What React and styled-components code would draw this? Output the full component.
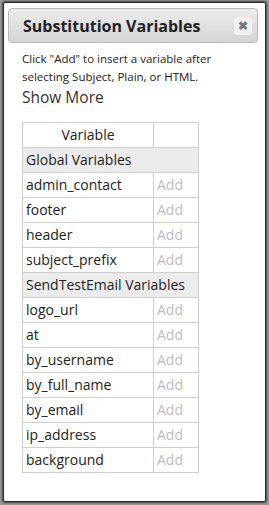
import React from "react";
import styled, { createGlobalStyle } from "styled-components";

const GlobalStyle = createGlobalStyle`
  html, body {
    margin: 0;
    padding: 0;
    background: #9a9a9a;
  }
  body {
    font-family: "Open Sans", "DejaVu Sans", sans-serif;
  }
`;

const Frame = styled.div`
  width: 269px;
  height: 505px;
  box-sizing: border-box;
  padding: 2px 3px 3px 3px;
  display: flex;
`;

const Dialog = styled.div`
  flex: 1;
  display: flex;
  flex-direction: column;
  background: #fff;
  border: 1px solid #2b2b2b;
  box-shadow: 0 0 2px 1px rgba(0, 0, 0, 0.55);
  border-radius: 2px;
  padding: 5px 7px 0 4px;
`;

const TitleBar = styled.div`
  height: 33px;
  display: flex;
  align-items: center;
  justify-content: space-between;
  padding: 0 5px 0 14px;
  border: 1px solid #b9b9b9;
  border-radius: 4px;
  background: linear-gradient(#ececec, #d5d5d5);
`;

const Title = styled.div`
  font-size: 16px;
  font-weight: bold;
  color: #222;
`;

const Close = styled.button`
  width: 18px;
  height: 18px;
  padding: 0;
  border: none;
  border-radius: 3px;
  background: #f1f1f1;
  color: #777;
  font-size: 12px;
  font-weight: bold;
  line-height: 18px;
  display: flex;
  align-items: center;
  justify-content: center;
  cursor: pointer;
`;

const Body = styled.div`
  padding: 7px 0 0 14px;
`;

const Help = styled.p`
  margin: 0;
  font-size: 11.5px;
  line-height: 18px;
  color: #221a22;
`;

const ShowMore = styled.div`
  font-size: 15.5px;
  line-height: 22px;
  color: #333;
  margin-bottom: 14px;
`;

const Table = styled.table`
  border-collapse: collapse;
  font-size: 14px;
  line-height: 18px;
  color: #222;
`;

const Th = styled.th`
  border: 1px solid #cfcfcf;
  font-weight: normal;
  text-align: center;
  padding: 3px 3px;
  width: ${(p) => p.$w}px;
  box-sizing: border-box;
`;

const Td = styled.td`
  border: 1px solid #cfcfcf;
  padding: 3px 3px;
  background: ${(p) => (p.$group ? "#ececec" : "#fff")};
  color: ${(p) => (p.$muted ? "#bdbdbd" : "#222")};
  white-space: nowrap;
`;

const groups = [
  {
    name: "Global Variables",
    vars: ["admin_contact", "footer", "header", "subject_prefix"],
  },
  {
    name: "SendTestEmail Variables",
    vars: ["logo_url", "at", "by_username", "by_full_name", "by_email", "ip_address", "background"],
  },
];

export default function App() {
  return (
    <>
      <GlobalStyle />
      <Frame>
        <Dialog>
          <TitleBar>
            <Title>Substitution Variables</Title>
            <Close aria-label="close">✖</Close>
          </TitleBar>
          <Body>
            <Help>
              Click "Add" to insert a variable after selecting Subject, Plain, or HTML.
            </Help>
            <ShowMore>Show More</ShowMore>
            <Table>
              <thead>
                <tr>
                  <Th $w={131}>Variable</Th>
                  <Th $w={45}></Th>
                </tr>
              </thead>
              <tbody>
                {groups.map((g) => (
                  <React.Fragment key={g.name}>
                    <tr>
                      <Td $group colSpan={2}>{g.name}</Td>
                    </tr>
                    {g.vars.map((v) => (
                      <tr key={v}>
                        <Td>{v}</Td>
                        <Td $muted>Add</Td>
                      </tr>
                    ))}
                  </React.Fragment>
                ))}
              </tbody>
            </Table>
          </Body>
        </Dialog>
      </Frame>
    </>
  );
}
